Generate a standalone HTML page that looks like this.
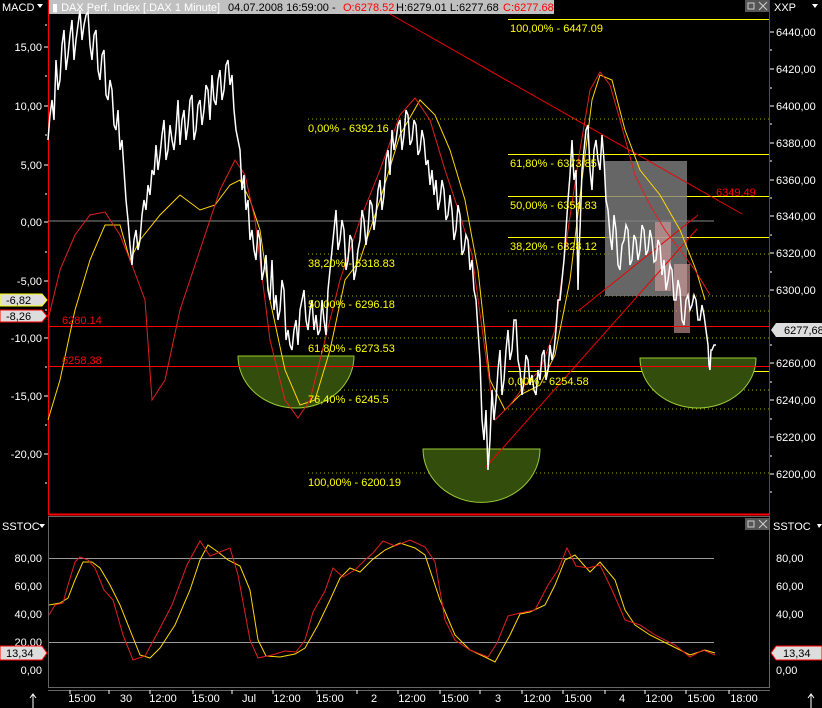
<!DOCTYPE html>
<html><head><meta charset="utf-8"><style>
html,body{margin:0;padding:0;background:#000;width:822px;height:708px;overflow:hidden}
svg{display:block;font-family:"Liberation Sans",sans-serif}
</style></head><body>
<svg width="822" height="708" viewBox="0 0 822 708" xmlns="http://www.w3.org/2000/svg">
<rect width="822" height="708" fill="#000"/>
<!-- header -->
<rect x="48" y="0" width="506" height="14" fill="#c0c0c0"/>
<text x="2" y="11" fill="#fff" font-size="11">MACD</text>
<path d="M37 4h6l-3 4z" fill="#fff"/>
<text x="52" y="11" font-size="11" fill="#fff">▮ DAX Perf. Index [.DAX  1 Minute]</text>
<text x="228" y="11" font-size="11" fill="#000">04.07.2008 16:59:00 -</text>
<text x="343" y="11" font-size="11" fill="#f00">O:6278.52</text>
<text x="396" y="11" font-size="11" fill="#000">H:6279.01 L:6277.68</text>
<text x="503" y="11" font-size="11" fill="#f00">C:6277.68</text>
<rect x="745" y="0" width="12" height="12" fill="#555"/><rect x="748" y="3" width="6" height="6" fill="none" stroke="#ccc"/>
<rect x="757" y="0" width="12" height="12" fill="#555"/><path d="M759 2l8 8M767 2l-8 8" stroke="#ccc"/>
<text x="774" y="11" fill="#fff" font-size="11">XXP</text>
<path d="M812 4h6l-3 4z" fill="#fff"/>
<!-- axes lines -->
<line x1="48.5" y1="0" x2="48.5" y2="515" stroke="#f00"/>
<line x1="769.5" y1="0" x2="769.5" y2="515" stroke="#f00"/>
<line x1="48" y1="514.5" x2="770" y2="514.5" stroke="#f00" stroke-width="2"/>
<!-- left axis labels -->
<g fill="#fff" font-size="11" text-anchor="end">
<text x="42" y="51">15,00</text><text x="42" y="110">10,00</text><text x="42" y="169">5,00</text>
<text x="42" y="226">0,00</text><text x="42" y="285">-5,00</text><text x="42" y="342">-10,00</text>
<text x="42" y="400">-15,00</text><text x="42" y="458">-20,00</text>
</g>
<g stroke="#fff"><path d="M44 47h4M44 106h4M44 165h4M44 222h4M44 281h4M44 338h4M44 396h4M44 454h4M45 25h2M45 76h2M45 135h2M45 194h2M45 252h2M45 310h2M45 367h2M45 425h2M45 483h2"/></g>
<!-- right axis labels -->
<g fill="#fff" font-size="11">
<text x="776" y="36">6440,00</text><text x="776" y="73">6420,00</text><text x="776" y="110">6400,00</text>
<text x="776" y="147">6380,00</text><text x="776" y="184">6360,00</text><text x="776" y="220">6340,00</text>
<text x="776" y="257">6320,00</text><text x="776" y="294">6300,00</text><text x="776" y="367">6260,00</text>
<text x="776" y="404">6240,00</text><text x="776" y="441">6220,00</text><text x="776" y="478">6200,00</text>
</g>
<g stroke="#fff"><path d="M770 32h4M770 69h4M770 106h4M770 143h4M770 180h4M770 216h4M770 253h4M770 290h4M770 363h4M770 400h4M770 437h4M770 474h4M770 50h2M770 88h2M770 124h2M770 161h2M770 198h2M770 235h2M770 272h2M770 345h2M770 382h2M770 419h2M770 456h2M770 492h2"/></g>
<!-- value tags -->
<path d="M0 294h42l5 6l-5 6h-42z" fill="#ddd" stroke="#ff0"/><text x="6" y="304" font-size="11">-6,82</text>
<path d="M0 310h42l5 6l-5 6h-42z" fill="#ddd" stroke="#f00"/><text x="6" y="320" font-size="11">-8,26</text>
<path d="M822 323h-46l-5 7l5 7h46z" fill="#ddd"/><text x="784" y="334" font-size="11">6277,68</text>
<!-- grid / fib -->
<line x1="48" y1="221" x2="714" y2="221" stroke="#888"/>
<g stroke="#ff0" stroke-width="1">
<line x1="508" y1="19.5" x2="769" y2="19.5"/><line x1="508" y1="154.5" x2="769" y2="154.5"/>
<line x1="508" y1="196.5" x2="769" y2="196.5"/><line x1="508" y1="237.5" x2="769" y2="237.5"/>
<line x1="508" y1="371.5" x2="769" y2="371.5"/>
</g>
<g stroke="#aa0" stroke-dasharray="1,3">
<line x1="308" y1="119" x2="769" y2="119"/><line x1="308" y1="254" x2="769" y2="254"/>
<line x1="308" y1="296" x2="769" y2="296"/><line x1="308" y1="338" x2="769" y2="338"/>
<line x1="308" y1="390" x2="769" y2="390"/><line x1="308" y1="473" x2="769" y2="473"/>
<line x1="508" y1="311" x2="769" y2="311"/><line x1="508" y1="409" x2="769" y2="409"/>
</g>
<!-- shapes -->
<path d="M238 356h116a58 52 0 0 1 -116 0z" fill="#334d0d" stroke="#9c3"/>
<path d="M423 449h117a58 53 0 0 1 -117 0z" fill="#334d0d" stroke="#9c3"/>
<path d="M640 358h116a58 50 0 0 1 -116 0z" fill="#334d0d" stroke="#9c3"/>
<rect x="605" y="161" width="82" height="135" fill="#808080" opacity="0.8"/>
<rect x="655" y="222" width="16" height="69" fill="#d9a0a0" opacity="0.6"/>
<rect x="674" y="264" width="16" height="69" fill="#d9a0a0" opacity="0.6"/>
<line x1="48" y1="326.5" x2="769" y2="326.5" stroke="#f00"/>
<line x1="48" y1="366.5" x2="769" y2="366.5" stroke="#f00"/>
<g stroke="#e00" fill="none">
<line x1="390" y1="14" x2="742" y2="214"/>
<line x1="485" y1="468" x2="697" y2="229"/>
<line x1="578" y1="311" x2="698" y2="215"/>
</g>
<!-- MACD lines -->
<polyline fill="none" stroke="#ffd700" points="48,420 60,380 75,310 90,260 105,225 120,225 130,260 140,240 160,215 180,195 200,210 215,205 230,185 240,180 250,200 260,230 270,300 285,370 300,405 315,400 330,350 345,280 360,260 380,200 400,135 420,100 435,115 450,150 465,200 478,270 490,380 505,410 520,395 540,385 555,355 570,280 582,180 592,100 600,75 612,80 625,130 640,170 660,195 680,230 696,270 705,300"/>
<polyline fill="none" stroke="#e02020" points="48,320 60,270 75,235 90,215 105,212 120,235 132,265 145,300 152,400 165,380 180,310 200,250 220,190 235,160 245,175 255,220 270,340 285,400 298,418 310,400 325,340 340,280 360,220 380,170 400,115 415,98 430,120 445,170 460,215 472,255 485,350 495,420 510,405 525,385 540,370 555,330 568,230 580,150 590,90 600,72 610,85 620,120 635,175 650,205 665,230 680,250 695,270 710,295"/>
<!-- price -->
<polyline fill="none" stroke="#fff" stroke-width="1.5" points="48,140 50,115 52,100 54,120 56,60 58,90 60,80 62,45 64,30 66,70 68,55 70,35 72,20 74,60 76,40 78,25 80,10 82,40 84,25 86,15 88,12 90,45 92,60 94,35 96,30 98,70 100,80 102,55 104,50 106,95 108,100 110,80 112,90 114,125 116,130 118,110 120,150 122,140 124,170 126,200 128,220 130,245 132,265 134,240 136,230 138,250 140,240 142,215 144,200 146,210 148,185 150,195 152,170 154,175 156,145 158,170 160,155 162,135 164,120 166,160 168,150 170,125 172,140 174,150 176,130 178,100 180,145 182,120 184,110 186,140 188,125 190,100 192,95 194,140 196,130 198,105 200,100 202,125 204,110 206,85 208,90 210,120 212,75 214,100 216,105 218,80 220,70 222,100 224,90 226,65 228,60 230,85 232,75 234,110 236,130 238,140 240,150 242,190 244,175 246,210 248,200 250,240 252,230 254,250 256,260 258,230 260,240 262,280 264,270 266,255 268,290 270,300 272,260 274,310 276,295 278,320 280,310 282,280 284,290 286,340 288,330 290,345 292,350 294,330 296,320 298,345 300,310 302,300 304,290 306,320 308,330 310,310 312,300 314,330 316,315 318,335 320,330 322,300 324,320 326,335 328,290 330,270 332,250 334,230 336,210 338,250 340,240 342,220 344,230 346,270 348,260 350,235 352,240 354,280 356,270 358,250 360,240 362,210 364,220 366,245 368,230 370,200 372,205 374,230 376,215 378,190 380,180 382,210 384,195 386,160 388,150 390,175 392,130 394,150 396,140 398,125 400,120 402,150 404,135 406,110 408,115 410,145 412,140 414,120 416,125 418,155 420,150 422,130 424,140 426,165 428,160 430,185 432,170 434,195 436,180 438,210 440,200 442,180 444,190 446,220 448,215 450,195 452,210 454,240 456,230 458,205 460,215 462,255 464,250 466,235 468,240 470,270 472,260 474,290 476,300 478,330 480,360 482,420 484,440 486,410 488,470 490,440 492,390 494,420 496,400 498,370 500,350 502,395 504,380 506,350 508,330 510,360 512,350 514,320 516,320 518,360 520,370 522,395 524,380 526,355 528,360 530,385 532,375 534,390 536,395 538,370 540,380 542,355 544,350 546,380 548,370 550,345 552,360 554,350 556,330 558,300 560,300 562,280 564,260 566,230 568,200 570,175 572,140 574,180 576,170 577,230 578,290 579,250 580,230 582,170 584,150 586,130 588,125 590,170 592,190 594,150 596,140 598,160 600,170 602,135 604,160 606,200 608,210 610,235 612,250 614,215 616,230 618,265 620,270 622,245 624,240 626,225 628,230 630,265 632,260 634,235 636,240 638,260 640,250 642,225 644,230 646,255 648,250 650,230 652,240 654,262 656,260 658,240 660,245 662,275 664,260 666,290 668,280 670,265 672,270 674,300 676,300 678,280 680,290 682,320 684,325 686,300 688,295 690,310 692,305 694,295 696,300 698,320 700,320 702,305 704,315 706,330 708,345 709,365 710,370 711,350 712,350 714,345 716,345"/>
<!-- fib labels -->
<g fill="#ff0" font-size="11">
<text x="510" y="32">100,00% - 6447.09</text>
<text x="308" y="132">0,00% - 6392.16</text>
<text x="510" y="167">61,80% - 6373.85</text>
<text x="510" y="209">50,00% - 6354.83</text>
<text x="510" y="250">38,20% - 6328.12</text>
<text x="308" y="267">38,20% - 6318.83</text>
<text x="308" y="308">50,00% - 6296.18</text>
<text x="308" y="352">61,80% - 6273.53</text>
<text x="508" y="385">0,00% - 6254.58</text>
<text x="308" y="403">76,40% - 6245.5</text>
<text x="308" y="486">100,00% - 6200.19</text>
</g>
<g fill="#f00" font-size="11">
<text x="62" y="324">6280.14</text><text x="62" y="364">6258.38</text><text x="716" y="196">6349.49</text>
</g>
<!-- lower panel -->
<rect x="48.5" y="516.5" width="721" height="171" fill="none" stroke="#666"/>
<text x="2" y="530" fill="#fff" font-size="11">SSTOC</text><path d="M39 524h6l-3 4z" fill="#fff"/>
<text x="773" y="530" fill="#fff" font-size="11">SSTOC</text><path d="M817 524h5l-3 4z" fill="#fff"/>
<rect x="745" y="518" width="12" height="12" fill="#555"/><rect x="748" y="521" width="6" height="6" fill="none" stroke="#ccc"/>
<rect x="757" y="518" width="12" height="12" fill="#555"/><path d="M759 520l8 8M767 520l-8 8" stroke="#ccc"/>
<line x1="49" y1="558.5" x2="714" y2="558.5" stroke="#999"/>
<line x1="49" y1="642.5" x2="714" y2="642.5" stroke="#999"/>
<g fill="#fff" font-size="11" text-anchor="end">
<text x="42" y="562">80,00</text><text x="42" y="590">60,00</text><text x="42" y="618">40,00</text><text x="42" y="646">20,00</text><text x="42" y="674">0,00</text>
</g>
<g fill="#fff" font-size="11">
<text x="776" y="562">80,00</text><text x="776" y="590">60,00</text><text x="776" y="618">40,00</text><text x="776" y="674">0,00</text>
</g>
<path d="M0 646h42l5 7l-5 7h-42z" fill="#ddd" stroke="#f00"/><text x="6" y="657" font-size="11">13,34</text>
<path d="M822 646h-46l-5 7l5 7h46z" fill="#ddd" stroke="#f00"/><text x="783" y="657" font-size="11">13,34</text>
<polyline fill="none" stroke="#ffd700" points="49,605 60,603 68,598 75,580 83,562 92,562 100,568 110,585 120,605 130,630 140,655 150,658 160,648 175,625 190,590 200,560 208,545 218,552 228,560 240,566 250,590 258,640 266,656 280,657 295,654 305,648 318,625 330,600 340,578 350,568 360,572 372,560 385,550 400,543 415,548 425,555 440,600 455,635 470,650 485,657 495,662 510,635 520,614 530,612 545,605 555,585 565,560 575,555 590,572 600,562 615,580 625,610 635,625 650,635 670,645 690,655 705,650 715,653"/>
<polyline fill="none" stroke="#e02020" points="49,615 55,605 63,603 68,585 75,562 80,557 88,560 95,568 104,590 113,600 123,635 133,660 145,656 158,632 172,605 187,565 200,541 210,556 220,552 230,548 238,575 250,640 258,658 272,655 285,651 296,652 305,640 313,612 325,591 333,568 343,577 355,570 365,560 373,553 383,541 395,546 410,540 425,547 435,562 445,620 455,640 470,650 488,657 497,643 508,616 520,613 535,610 548,585 558,570 567,548 576,566 588,568 600,565 612,590 625,620 640,625 655,635 675,645 690,657 703,650 715,655"/>
<!-- bottom axis -->
<line x1="48" y1="690.5" x2="770" y2="690.5" stroke="#666"/>
<g stroke="#fff"><path d="M70 690v4M109 690v4M150 690v4M193 690v4M232 690v4M273 690v4M317 690v4M357 690v4M398 690v4M440 690v4M480 690v4M522 690v4M563 690v4M605 690v4M645 690v4M686 690v4M729 690v4"/></g>
<g fill="#fff" font-size="11" text-anchor="middle">
<text x="82" y="702">15:00</text><text x="126" y="702">30</text><text x="163" y="702">12:00</text><text x="206" y="702">15:00</text>
<text x="249" y="702">Jul</text><text x="287" y="702">12:00</text><text x="330" y="702">15:00</text><text x="374" y="702">2</text>
<text x="412" y="702">12:00</text><text x="455" y="702">15:00</text><text x="498" y="702">3</text><text x="537" y="702">12:00</text>
<text x="578" y="702">15:00</text><text x="622" y="702">4</text><text x="659" y="702">12:00</text><text x="701" y="702">15:00</text><text x="744" y="702">18:00</text>
</g>
<path d="M33 708v-14M30 698l3-4l3 4M811 708v-14M808 698l3-4l3 4" stroke="#fff" fill="none"/>
</svg>
</body></html>
